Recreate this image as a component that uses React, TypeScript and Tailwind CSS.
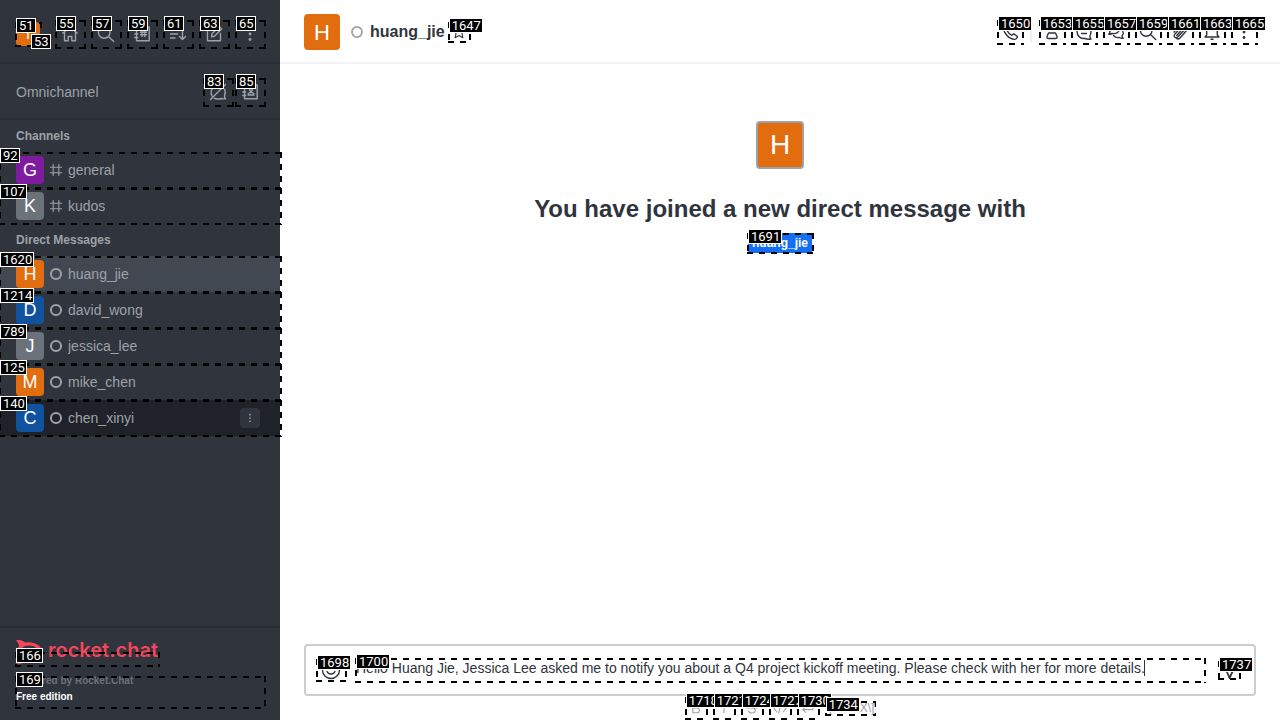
import type { ReactNode } from "react";
import clsx from "clsx";

function Mark({ id, outline = true }: { id: number; outline?: boolean }) {
  return (
    <span aria-hidden="true" className="pointer-events-none absolute top-0 -right-[2px] -bottom-px -left-px z-10">
      {outline && (
        <svg className="absolute inset-0 size-full" stroke="#000" strokeWidth="4" strokeDasharray="6 6">
          <line x1="0" y1="0" x2="100%" y2="0" />
          <line x1="0" y1="100%" x2="100%" y2="100%" />
          <line x1="0" y1="0" x2="0" y2="100%" />
          <line x1="100%" y1="0" x2="100%" y2="100%" />
        </svg>
      )}
      <span className="absolute -top-[4px] left-px flex h-[15px] items-center border border-white bg-black pr-px pl-[2px] font-['Roboto',sans-serif] text-[13px] leading-[13px] font-normal text-white">
        {id}
      </span>
    </span>
  );
}

function Icon({ children, className = "size-5", width = 1.4 }: { children: ReactNode; className?: string; width?: number }) {
  return (
    <svg
      viewBox="0 0 20 20"
      className={clsx("shrink-0", className)}
      fill="none"
      stroke="currentColor"
      strokeWidth={width}
      strokeLinecap="round"
      strokeLinejoin="round"
      aria-hidden="true"
    >
      {children}
    </svg>
  );
}

const icons = {
  home: <path d="M2.800 9 10 3l7.200 6M4.500 8v8.800h3.700v-4.300h3.600v4.300h3.700V8M14.500 3.500v2.800" />,
  search: <path d="M14 8.500a5.800 5.800 0 1 1-11.600 0 5.800 5.800 0 0 1 11.600 0ZM12.700 12.700l5 4.800" />,
  directory: (
    <path d="M4.500 3h12.700v13.800H4.500ZM2.800 6.300h3M2.800 10h3M2.800 13.500h3M10 6.500v6M12.800 6.500v6M8.500 8.300h6M8.500 10.800h6" />
  ),
  sort: <path d="M2.500 6h9M2.500 10h7M2.500 14h4.500M14.500 4.500v11M11.500 12.500l3 3 3-3" />,
  edit: <path d="M11 4H3.500v12.700h13V9.500M7.500 12.800l.5-3 7.200-7.300 2.500 2.500-7.300 7.200Z" />,
  kebab: (
    <g fill="currentColor" stroke="none">
      <circle cx="10" cy="4.500" r="1.400" />
      <circle cx="10" cy="10" r="1.400" />
      <circle cx="10" cy="15.500" r="1.400" />
    </g>
  ),
  livechatOff: (
    <path d="M13.800 4.200A7.300 7.300 0 0 0 4 14M6 16.200c2 1 4.500 1.100 7 .3 1.500.5 3 .5 4.500.2-1-1-1.200-2-1-3.200 1.100-2 1-4.300.2-6.300M2.500 17.500l15-15" />
  ),
  contacts: (
    <path d="M4.500 3h12.700v13.800H4.500ZM2.800 6.300h3M2.800 10h3M2.800 13.500h3M8.200 13v-1.500l1.800-1h2l1.800 1V13ZM12.300 7.800a1.300 1.300 0 1 1-2.600 0 1.300 1.300 0 0 1 2.600 0Z" />
  ),
  phone: (
    <path d="M3.200 4.200 5.500 2.500l3 4-1.600 1.800c1 2.200 2.800 4 5 5l1.800-1.600 3.600 2.700c.2 1.500-1 2.800-2.600 3C8.500 17 3 10.500 3.200 4.200Z" />
  ),
  team: (
    <path d="M12.800 5.500a2.800 2.800 0 1 1-5.600 0 2.800 2.800 0 0 1 5.600 0ZM6.500 11h7l1.500 3.500c.3 1.200-.4 2-1.500 2h-7c-1.100 0-1.800-.8-1.500-2Z" />
  ),
  thread: (
    <path d="M17 9.500a7 6.800 0 0 0-14 0c0 4.500 3.500 7.500 8 7 2 .8 4.200.8 6 .5-1-1-1.300-2-1-3.300.7-1.200 1-2.700 1-4.200ZM7 8h6M7.500 11.500h5" />
  ),
  discussion: (
    <path d="M13.500 6.500c0-2-2.500-3.500-5.300-3.500C5.300 3 3 4.700 3 7c0 1 .3 1.800 1 2.500 0 1-.5 2-1.200 2.800 1.400 0 2.500-.3 3.500-.8 4 .7 7.200-1.200 7.200-5ZM15 7.500c1.500.8 2.300 2 2.300 3.500-.1 1-.6 2-1.300 2.500.1 1 .5 2 1.200 2.700-1.500.2-2.700-.1-3.700-.7-2.500.5-4.700-.3-6-2" />
  ),
  clip: <path d="m4 10 6-6.200c2.800-2.300 6.800 1 4.500 4l-7 7.500c-2 1.500-4.300-.7-3-2.700l6.500-7M15.500 6.500 17 8l-7 8c-1 1-2.500 1.200-3.500.5M12.500 7l-5.800 6.500" />,
  bell: <path d="M3 15h14l-1.700-2V8.500a5.300 5.300 0 0 0-10.600 0V13ZM9 17.300h2M10 3V2" />,
  star: <path d="m10 2.500 2.300 5 5.400.6-4 3.700 1.100 5.400L10 14.500l-4.800 2.700 1.100-5.400-4-3.700 5.400-.6Z" />,
  emoji: (
    <path d="M18.500 10a8.500 8.500 0 1 1-17 0 8.500 8.500 0 0 1 17 0ZM6 11.500c1.500 3.300 6.500 3.300 8 0M7 7.300v.4M13 7.300v.4" />
  ),
  send: <path d="M17.500 3 2.500 8l5.300 3.500ZM17.500 3l-7 15-2.700-6.500" strokeWidth="1.800" />,
  bold: <path d="M6 4h4.500a3 3 0 0 1 0 6H6ZM6 10h5.200a3 3 0 0 1 0 6H6Z" />,
  italic: <path d="M10 4v12" />,
  strike: <path d="M14 6c-.5-1.500-2-2.300-4-2.300-4.800 0-5.300 4.800-.5 6 6.500 1.300 5.500 6.600.5 6.600-2.300 0-4-1-4.300-2.600M3.500 10h13" />,
  code: <path d="M6 6 2.500 10.500 6 15M14 6l3.500 4.500L14 15M11.800 4l-3.500 12.500" />,
  multiline: <path d="M16.500 5v5.500c0 1-.5 1.500-1.500 1.500H4M7 8.500 3.500 12 7 15.500" />,
};

type IconName = keyof typeof icons;

function IconButton({ icon, label, mark, className }: { icon: IconName; label: string; mark: number; className: string }) {
  return (
    <button type="button" aria-label={label} className={clsx("relative flex shrink-0 items-center justify-center", className)}>
      <Icon>{icons[icon]}</Icon>
      <Mark id={mark} />
    </button>
  );
}

const navActions: { icon: IconName; label: string; mark: number }[] = [
  { icon: "home", label: "Home", mark: 55 },
  { icon: "search", label: "Search", mark: 57 },
  { icon: "directory", label: "Directory", mark: 59 },
  { icon: "sort", label: "Display", mark: 61 },
  { icon: "edit", label: "Create new", mark: 63 },
  { icon: "kebab", label: "Administration", mark: 65 },
];

const roomActions: { icon: IconName; label: string; mark: number }[] = [
  { icon: "team", label: "User info", mark: 1653 },
  { icon: "thread", label: "Threads", mark: 1655 },
  { icon: "discussion", label: "Discussion", mark: 1657 },
  { icon: "search", label: "Search messages", mark: 1659 },
  { icon: "clip", label: "Files", mark: 1661 },
  { icon: "bell", label: "Notifications", mark: 1663 },
  { icon: "kebab", label: "Options", mark: 1665 },
];

const formatActions: { icon: IconName; label: string; mark: number }[] = [
  { icon: "bold", label: "Bold", mark: 1718 },
  { icon: "italic", label: "Italic", mark: 1721 },
  { icon: "strike", label: "Strike", mark: 1724 },
  { icon: "code", label: "Inline code", mark: 1727 },
  { icon: "multiline", label: "Multi line", mark: 1730 },
];

type Room = { name: string; mark: number; color: string; state?: "selected" | "hovered" };

const channels: Room[] = [
  { name: "general", mark: 92, color: "bg-[#7f1b9f]" },
  { name: "kudos", mark: 107, color: "bg-[#6c727a]" },
];

const directs: Room[] = [
  { name: "huang_jie", mark: 1620, color: "bg-[#e26d0e]", state: "selected" },
  { name: "david_wong", mark: 1214, color: "bg-[#10529e]" },
  { name: "jessica_lee", mark: 789, color: "bg-[#6c727a]" },
  { name: "mike_chen", mark: 125, color: "bg-[#e26d0e]" },
  { name: "chen_xinyi", mark: 140, color: "bg-[#10529e]", state: "hovered" },
];

function RoomList({ title, rooms, channel = false }: { title: string; rooms: Room[]; channel?: boolean }) {
  return (
    <section>
      <h3 className="flex h-8 items-center px-4 text-xs font-bold">{title}</h3>
      <ul>
        {rooms.map((room) => (
          <li
            key={room.name}
            className={clsx(
              "relative flex h-9 items-center pr-5 pl-4",
              room.state === "selected" && "bg-[#414852]",
              room.state === "hovered" && "bg-[#1f2329]",
            )}
          >
            <a href={`#${room.name}`} className="flex min-w-0 flex-1 items-center gap-1">
              <span className={clsx("flex size-7 items-center justify-center rounded-sm text-lg text-white", room.color)}>
                {room.name[0].toUpperCase()}
              </span>
              <Icon className="size-4" width={channel ? 1.4 : 2.5}>
                {channel ? <path d="M6.500 3v14M13.500 3v14M3 6.500h14M3 13.500h14" /> : <circle cx="10" cy="10" r="6.300" />}
              </Icon>
              <span className="truncate text-sm">{room.name}</span>
            </a>
            {room.state === "hovered" && (
              <button type="button" aria-label="Room menu" className="flex size-5 items-center justify-center rounded-sm bg-[#2f343d]">
                <Icon className="size-3">{icons.kebab}</Icon>
              </button>
            )}
            <Mark id={room.mark} />
          </li>
        ))}
      </ul>
    </section>
  );
}

function Sidebar() {
  return (
    <aside className="flex w-[280px] shrink-0 flex-col bg-[#2f343d] text-[#9ea2a8]">
      <header className="flex h-16 items-center justify-between border-b-2 border-[#292d36] px-4 pt-1.5">
        <button type="button" aria-label="User menu" className="relative flex size-6 items-center justify-center rounded-sm bg-[#e26d0e] text-sm text-white">
          T
          <Mark id={51} />
          <span className="absolute top-4 left-[15px] size-2">
            <Mark id={53} outline={false} />
          </span>
        </button>
        <nav className="flex gap-2">
          {navActions.map((a) => (
            <IconButton key={a.mark} {...a} className="size-7" />
          ))}
        </nav>
      </header>
      <div className="flex h-14 items-center justify-between border-b-2 border-[#292d36] px-4 pt-0.5">
        <h2 className="text-sm">Omnichannel</h2>
        <div className="flex gap-1">
          <IconButton icon="livechatOff" label="Turn on answer chats" mark={83} className="size-7" />
          <IconButton icon="contacts" label="Contact center" mark={85} className="size-7" />
        </div>
      </div>
      <div className="flex-1">
        <RoomList title="Channels" rooms={channels} channel />
        <RoomList title="Direct Messages" rooms={directs} />
      </div>
      <footer className="border-t-2 border-[#292d36] px-4 py-3">
        <div className="relative flex h-6 w-[142px] gap-[6px] text-[#f5455c]">
          <svg viewBox="0 0 26 24" className="h-6 w-[26px] shrink-0" aria-hidden="true">
            <path
              fill="currentColor"
              fillRule="evenodd"
              d="M0 .4C4-.6 7 .5 9 2.500c8-1.500 17 2.500 17 9.300 0 7-9 11.200-17 9.500-2 2-5 3.200-9 2.300 2.700-2.600 3.500-4.600 2.500-7.200-2-2.700-2-6.400 0-9.200C3.500 5 2.700 3 0 .4ZM13 5.500C8 5.500 4.500 8.300 4.500 12S8 18.300 13 18.300 22 15.700 22 12s-4-6.500-9-6.500Z"
            />
          </svg>
          <a href="#rocket" className="font-['Inter',sans-serif] text-xl leading-5 font-semibold">
            rocket.chat
          </a>
          <span className="absolute inset-x-0 top-3 h-[14px]">
            <Mark id={166} />
          </span>
        </div>
        <div className="relative mt-3 flex h-8 flex-col text-[10px] leading-4 font-bold">
          <p className="-mt-[3px] text-[#6c727a]">Powered by Rocket.Chat</p>
          <p className="text-white">Free edition</p>
          <Mark id={169} />
        </div>
      </footer>
    </aside>
  );
}

export default function App() {
  return (
    <div className="flex h-screen overflow-hidden bg-white font-['Liberation_Sans',Arial,sans-serif] text-[#2f343d]">
      <Sidebar />
      <main className="flex min-w-0 flex-1 flex-col">
        <header className="flex h-16 shrink-0 items-center border-b-2 border-[#f2f3f5] px-6 pt-0.5">
          <span className="flex size-9 items-center justify-center rounded-sm bg-[#e26d0e] text-[22px] text-white">H</span>
          <Icon className="ml-[9px] size-4 text-[#9ea2a8]" width={2.2}>
            <circle cx="10" cy="10" r="6.300" />
          </Icon>
          <h1 className="ml-[5px] text-base font-bold">huang_jie</h1>
          <button type="button" aria-label="Favorite" className="relative ml-1 flex size-5 items-center justify-center">
            <Icon className="size-4">{icons.star}</Icon>
            <Mark id={1647} />
          </button>
          <div className="ml-auto flex items-center gap-2">
            <IconButton icon="phone" label="Call" mark={1650} className="size-6" />
            <span className="h-5 w-[2px] bg-[#eeeff1]" />
            {roomActions.map((a) => (
              <IconButton key={a.mark} {...a} className="size-6" />
            ))}
          </div>
        </header>

        <section className="flex flex-1 flex-col items-center pt-[57px]">
          <span className="flex size-12 items-center justify-center rounded-sm border-2 border-[#9ea2a8] bg-[#e26d0e] text-[28px] text-white">H</span>
          <h2 className="mt-6 text-2xl leading-8 font-bold">You have joined a new direct message with</h2>
          <a href="#huang_jie" className="relative mt-2 rounded-xs bg-[#156ff5] px-1 text-xs leading-5 font-bold text-white">
            huang_jie
            <Mark id={1691} />
          </a>
        </section>

        <form className="shrink-0 px-6" onSubmit={(e) => e.preventDefault()}>
          <div className="flex h-[52px] items-center rounded-sm border-2 border-[#cbced1] pr-[15px] pl-[11px]">
            <IconButton icon="emoji" label="Emoji" mark={1698} className="h-[22px] w-7" />
            <div className="relative ml-[11px] h-6 flex-1">
              <textarea
                aria-label="Message"
                rows={1}
                defaultValue="Hello Huang Jie, Jessica Lee asked me to notify you about a Q4 project kickoff meeting. Please check with her for more details."
                className="block h-6 w-full resize-none overflow-hidden text-sm leading-5 outline-none"
              />
              <span className="absolute top-[2px] left-[788px] h-4 w-px bg-[#2f343d]" />
              <Mark id={1700} />
            </div>
            <IconButton icon="send" label="Send" mark={1737} className="ml-[15px] h-[18px] w-5" />
          </div>
          <div className="flex h-6 items-center justify-center gap-2 text-[#9ea2a8]">
            {formatActions.map((a) => (
              <button key={a.mark} type="button" aria-label={a.label} className="relative flex h-[22px] w-5 items-center justify-center">
                <Icon className="size-4">{icons[a.icon]}</Icon>
                <Mark id={a.mark} />
              </button>
            ))}
            <a href="#katex" className="relative text-xs leading-[14px]">
              \[KaTeX\]
              <Mark id={1734} />
            </a>
          </div>
        </form>
      </main>
    </div>
  );
}
